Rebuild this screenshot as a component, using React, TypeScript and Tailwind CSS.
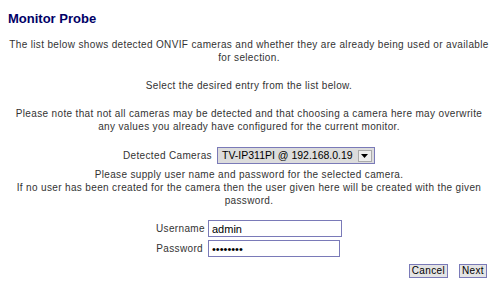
import React from "react";

const font = { fontFamily: '"Liberation Sans", Arial, sans-serif' };

const App = () => {
  return (
    <div className="w-[498px] h-[296px] bg-white text-[#333] overflow-hidden" style={font}>
      <h1 className="pl-2 pt-[11px] text-[13px] leading-[15px] font-bold text-[#000066]">Monitor Probe</h1>
      <div className="px-[9px] pt-[12px] text-[10px] leading-[13px] tracking-[0.35px] text-center">
        <p>The list below shows detected ONVIF cameras and whether they are already being used or available for selection.</p>
        <p className="mt-[15px]">Select the desired entry from the list below.</p>
        <p className="mt-[15px]">Please note that not all cameras may be detected and that choosing a camera here may overwrite any values you already have configured for the current monitor.</p>
        <div className="mt-[14px] flex justify-center items-center gap-[5px]">
          <span>Detected Cameras</span>
          <div className="flex items-center h-[17px] w-[158px] border border-[#7a7ab8] bg-[#dcdcdc] text-[10.5px] tracking-normal text-black">
            <span className="flex-1 pl-[4px] text-left whitespace-nowrap">TV-IP311PI @ 192.168.0.19</span>
            <span className="w-[14px] h-[12px] mr-[2px] flex items-center justify-center border border-[#aaa] bg-[#eee]">
              <svg width="7" height="4" viewBox="0 0 7 4"><path d="M0 0h7L3.5 4z" fill="#000" /></svg>
            </span>
          </div>
        </div>
        <p className="mt-[4px]">Please supply user name and password for the selected camera.<br />If no user has been created for the camera then the user given here will be created with the given password.</p>
        <div className="mt-[13px] flex flex-col items-center gap-[3px]">
          <div className="flex items-center gap-[5px]">
            <span className="w-[47px] text-right whitespace-nowrap">Username</span>
            <input className="w-[134px] h-[17px] border border-[#7a7ab8] px-[3px] text-[11px] tracking-normal text-black outline-none" defaultValue="admin" />
          </div>
          <div className="flex items-center gap-[5px] pr-[2px]">
            <span className="w-[47px] text-right whitespace-nowrap">Password</span>
            <input type="password" className="w-[132px] h-[17px] border border-[#7a7ab8] px-[3px] text-[11px] tracking-normal text-black outline-none" defaultValue="admin123" />
          </div>
        </div>
        <div className="mt-[7px] flex justify-end gap-[11px] pr-[2px]">
          <button className="h-[14px] px-[2px] border border-[#7a7ab8] bg-[#e4e4e4] text-[10px] leading-[12px] text-black">Cancel</button>
          <button className="h-[14px] px-[2px] border border-[#7a7ab8] bg-[#e4e4e4] text-[10px] leading-[12px] text-black">Next</button>
        </div>
      </div>
    </div>
  );
};

export default App;
